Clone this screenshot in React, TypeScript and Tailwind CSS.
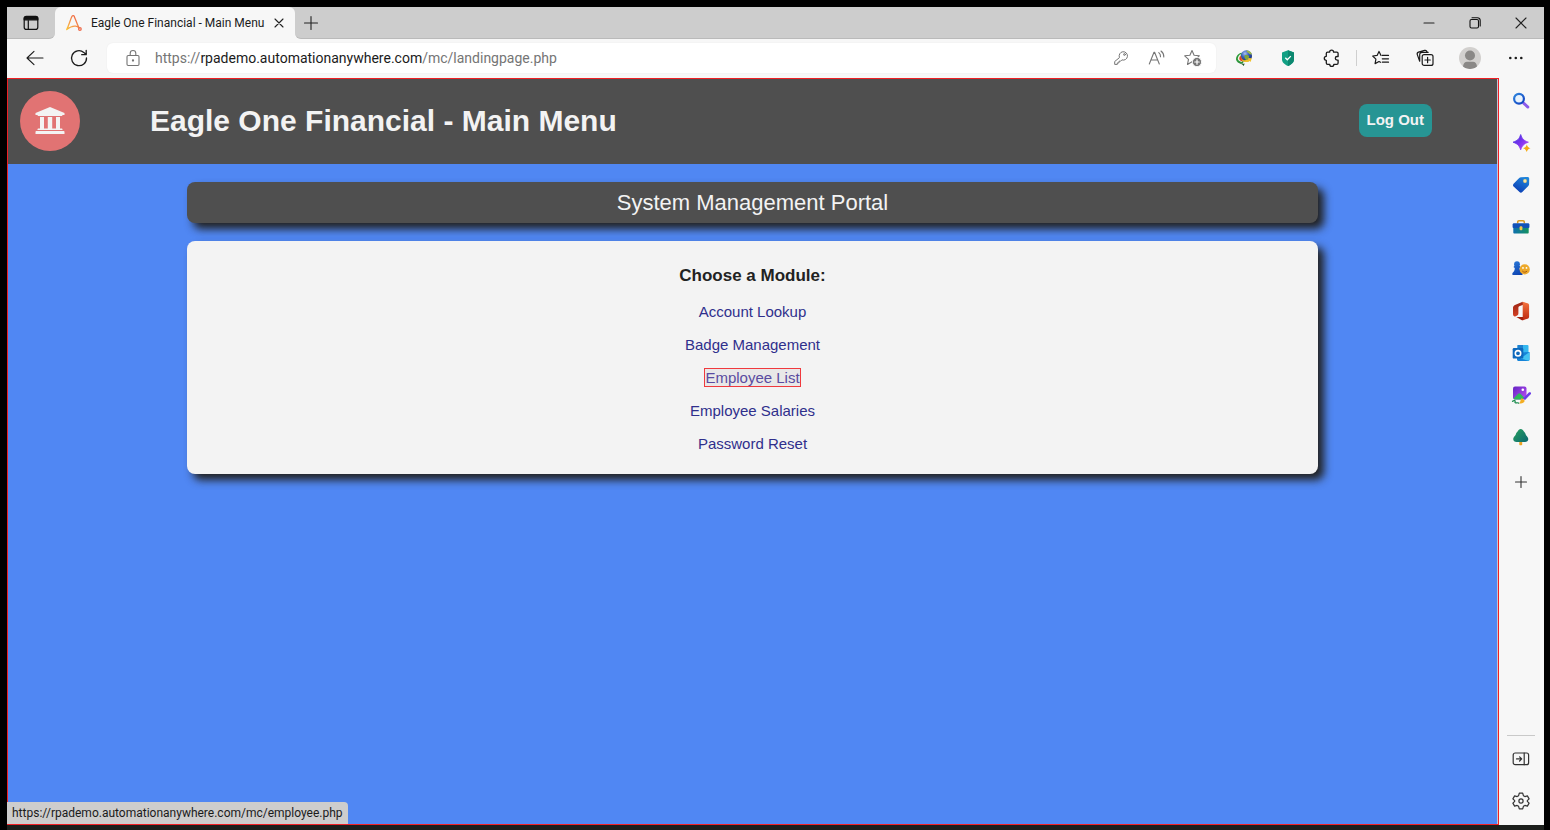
import type { ReactNode, SVGProps } from "react";

type IconProps = SVGProps<SVGSVGElement>;

function Line({ children, ...props }: IconProps) {
  return (
    <svg
      width="20"
      height="20"
      viewBox="0 0 20 20"
      fill="none"
      stroke="currentColor"
      strokeWidth="1.1"
      strokeLinecap="round"
      strokeLinejoin="round"
      aria-hidden="true"
      {...props}
    >
      {children}
    </svg>
  );
}

function Picture({ children }: { children: ReactNode }) {
  return (
    <svg width="20" height="20" viewBox="0 0 20 20" fill="none" aria-hidden="true">
      {children}
    </svg>
  );
}

const TabActionsIcon = () => (
  <Line strokeWidth="1.2">
    <rect x="3.2" y="3.6" width="13.6" height="12.8" rx="2.2" />
    <path d="M3.2 6.800V5.400a2 2 0 0 1 2-2h9.600a2 2 0 0 1 2 2V6.800Z" fill="currentColor" />
    <path d="M7.300 7.500v8.800" />
  </Line>
);

const TabLogo = () => (
  <svg className="shrink-0" width="18" height="18" viewBox="0 0 18 18" fill="none" strokeWidth="1.3" strokeLinecap="round" strokeLinejoin="round" aria-hidden="true">
    <defs>
      <linearGradient id="tab-logo" x1="1" y1="16" x2="15" y2="4" gradientUnits="userSpaceOnUse">
        <stop stopColor="#fbc531" />
        <stop offset="0.45" stopColor="#f59a4a" />
        <stop offset="1" stopColor="#ee5a45" />
      </linearGradient>
    </defs>
    <path d="M1.700 15.500C4 11.500 5 6.200 7 2.300c.5-1 1.800-1 2.200 0 1.600 4 2.800 7.700 4.700 11.300M1.700 15.500c2.800-2.300 5.800-3.800 9-3.400 1.600.2 2.600 1 3.400 2" stroke="url(#tab-logo)" />
    <circle cx="14.900" cy="15" r="1.300" stroke="#ee6a4a" />
  </svg>
);

const LockIcon = () => (
  <Line>
    <rect x="4" y="7.500" width="12" height="10" rx="1.200" />
    <path d="M7.200 7.500V5.300a2.800 2.800 0 0 1 5.600 0v2.200" />
    <circle cx="10" cy="12.500" r="0.600" fill="currentColor" />
  </Line>
);

const KeyIcon = () => (
  <Line strokeWidth="1">
    <path d="M8.300 9.300a4.200 4.200 0 1 1 2.600 2.600L9.600 13.200H8v1.700H6.300v1.500H3.700V13.900Z" />
    <circle cx="13.500" cy="6.500" r="0.900" />
  </Line>
);

const ReadAloudIcon = () => (
  <Line>
    <path d="M2.300 16 7 4.300h.6L12.300 16M4 12h6.600" />
    <path d="M11.800 4.700c1.200 1 1.800 2.500 1.700 4M14 3c1.900 1.500 2.900 3.700 2.800 6" />
  </Line>
);

const STAR = "M9 2.500l2.100 4.700 5.200.6-3.900 3.500 1 5.100L9 13.800l-4.500 2.600 1-5.100L1.700 7.800l5.200-.6Z";

const AddFavoriteIcon = () => (
  <Line>
    <path d={STAR} />
    <circle cx="14" cy="14" r="4.600" fill="#757575" stroke="#ffffff" strokeWidth="0.800" />
    <path d="M14 11.800v4.400M11.800 14h4.400" stroke="#ffffff" strokeWidth="1.200" />
  </Line>
);

const GlobeDownloadIcon = () => (
  <Picture>
    <defs>
      <radialGradient id="globe" cx="11" cy="5.500" r="8" gradientUnits="userSpaceOnUse">
        <stop stopColor="#a9c3ec" />
        <stop offset="0.450" stopColor="#3b62c4" />
        <stop offset="1" stopColor="#122a78" />
      </radialGradient>
    </defs>
    <circle cx="12.300" cy="8" r="5.700" fill="url(#globe)" />
    <path d="M12.500 2.600c2.300-.2 4.600 1.200 5.400 3.600-1.500.8-2.600-.4-3.500-1.200-.8-.6-2-1-1.900-2.400Z" fill="#9cb84a" />
    <path d="M10.500 7.500c1.700-.8 3.800-.5 4.500.8.500 1.600-1 2.600-2 4.200-1.600-.6-3-2.600-2.500-5Z" fill="#7fa53c" />
    <path d="M2 11.500C2 8 4.300 5.300 7.700 4.700 6.300 7.500 7.500 10.800 10.300 12l-1.500 3.500C5 15.800 2.300 14 2 11.500Z" fill="#2c9a3a" />
    <path d="M3.800 10.800C4 8.500 5 6.800 6.900 5.900c-.5 2.500.3 4.800 2.200 6.500l-1.300 1.500c-2.300-.3-3.700-1.400-4-3.100Z" fill="#f3f3e6" />
    <path d="M5.300 10.800c0-1.400.4-2.500 1.300-3.300.3 2.200 1.500 3.800 3.500 4.700l-1.600 1.300c-1.900-.4-3-1.300-3.200-2.700Z" fill="#df3d24" />
    <path d="M7 10.900c1.800 1.800 5 1.700 7.600.1l-.8-1 4 .2-1.200 3.800-.9-1.100c-3.200 2.200-7.300 1.200-8.700-2Z" fill="#f0c22b" />
    <path d="M4 13.500c1.800 2 4.500 2.600 6.700 2L9.700 18 8 16.300c-1.700-.3-3.200-1.300-4-2.800Z" fill="#205a2a" />
  </Picture>
);

const ShieldIcon = () => (
  <Picture>
    <path d="M10 2.200 16 4.600v6.800c0 3-2.600 5-6 6.500-3.400-1.500-6-3.500-6-6.500V4.600Z" fill="#12a084" />
    <path d="M10 2.200 16 4.600v6.800c0 3-2.600 5-6 6.500Z" fill="#0d8870" />
    <path d="m7.300 9.700 2 2 3.500-3.600" stroke="#ffffff" strokeWidth="1.300" />
  </Picture>
);

const PuzzleIcon = () => (
  <Line strokeWidth="1.300">
    <path d="M7.600 4.200a2 2 0 0 1 4 0h3.200a1.300 1.300 0 0 1 1.300 1.300v3h-1a1.800 1.800 0 0 0 0 3.600h1v3a1.300 1.300 0 0 1-1.300 1.300h-3a2 2 0 0 1-4 0H5.600a1.300 1.300 0 0 1-1.300-1.300v-2.800a2 2 0 0 1 0-4V5.500a1.300 1.300 0 0 1 1.300-1.300Z" />
  </Line>
);

const FavoritesIcon = () => (
  <Line strokeWidth="1.200">
    <path d="M10 7.400 8 3.400 6.100 7.400l-4.400.6 3.200 3.100-.8 4.500L8 13.500l1.500.8" />
    <path d="M11.300 7.400h6.200M11.300 10.800h6.200M11.300 14.200h6.200" />
  </Line>
);

const CollectionsIcon = () => (
  <Line strokeWidth="1.200">
    <rect x="7.200" y="6.600" width="10.800" height="10.800" rx="2" />
    <path d="M12.600 9.300v5.400M9.900 12h5.400" />
    <path d="M4.700 13.200 2.300 6.600a2 2 0 0 1 1.200-2.500L9.600 2.400a2 2 0 0 1 2.400 1.300v.5M4.700 13.200V6.700a2.300 2.300 0 0 1 2.300-2.400h6.200" />
  </Line>
);

const AvatarIcon = () => (
  <svg width="22" height="22" viewBox="0 0 22 22" aria-hidden="true">
    <defs>
      <clipPath id="avatar-clip">
        <circle cx="11" cy="11" r="11" />
      </clipPath>
    </defs>
    <g clipPath="url(#avatar-clip)">
      <rect width="22" height="22" fill="#d2d0ce" />
      <circle cx="11" cy="8.500" r="5" fill="#8a8886" />
      <path d="M4 20c0-3.500 2-5.300 4-5.300h6c2 0 4 1.800 4 5.300-4 2.700-10 2.700-14 0Z" fill="#8a8886" />
    </g>
  </svg>
);

const MoreIcon = () => (
  <svg width="20" height="20" viewBox="0 0 20 20" fill="currentColor" aria-hidden="true">
    <circle cx="4.300" cy="10" r="1.300" />
    <circle cx="9.800" cy="10" r="1.300" />
    <circle cx="15.300" cy="10" r="1.300" />
  </svg>
);

const SearchIcon = () => (
  <Picture>
    <defs>
      <linearGradient id="lens" x1="3" y1="3" x2="12" y2="13" gradientUnits="userSpaceOnUse">
        <stop stopColor="#2f86dd" />
        <stop offset="1" stopColor="#0f3fc0" />
      </linearGradient>
    </defs>
    <path d="m12.600 12.100 4.300 4" stroke="#8b5bea" strokeWidth="2.800" strokeLinecap="round" />
    <circle cx="8" cy="7.700" r="4.900" fill="#e9f3fc" stroke="url(#lens)" strokeWidth="2.200" />
  </Picture>
);

const SparkleIcon = () => (
  <Picture>
    <defs>
      <linearGradient id="spark" x1="2" y1="2" x2="17" y2="16" gradientUnits="userSpaceOnUse">
        <stop stopColor="#3a35d8" />
        <stop offset="0.500" stopColor="#7a33ee" />
        <stop offset="1" stopColor="#c04bf5" />
      </linearGradient>
    </defs>
    <path d="M9.700 1.500c1.500 4.500 3 6 7.700 7.700-4.700 1.700-6.200 3.200-7.700 7.700-1.500-4.500-3-6-7.700-7.700 4.700-1.700 6.200-3.200 7.700-7.700Z" fill="url(#spark)" stroke="url(#spark)" strokeWidth="0.800" strokeLinejoin="round" />
    <path d="M15.800 11.500c.8 2.300 1.500 3 3.700 3.800-2.200.8-2.900 1.500-3.700 3.800-.8-2.300-1.500-3-3.700-3.800 2.200-.8 2.900-1.500 3.700-3.800Z" fill="#f5ac13" />
  </Picture>
);

const TagIcon = () => (
  <Picture>
    <defs>
      <linearGradient id="tag" x1="15" y1="2" x2="6" y2="18" gradientUnits="userSpaceOnUse">
        <stop stopColor="#2088dc" />
        <stop offset="1" stopColor="#0b3bb3" />
      </linearGradient>
    </defs>
    <path d="M10 2.300 16.500 1.900c1 0 1.700.7 1.700 1.600l-.1 5.600c0 .7-.3 1.300-.8 1.800l-6 6.200c-.8.800-2 .8-2.800 0L2.600 11.600c-.8-.8-.8-2 0-2.800l5.600-5.700c.5-.5 1.100-.8 1.800-.8Z" fill="url(#tag)" />
    <circle cx="14" cy="6" r="1.900" fill="#f6d77a" />
    <circle cx="14" cy="6" r="0.700" fill="#ffffff" />
  </Picture>
);

const ToolboxIcon = () => (
  <Picture>
    <defs>
      <linearGradient id="toolbox" x1="2" y1="0" x2="18" y2="0" gradientUnits="userSpaceOnUse">
        <stop stopColor="#0e6fb0" />
        <stop offset="1" stopColor="#16935e" />
      </linearGradient>
    </defs>
    <path d="M6.700 6.500V5c0-.7.500-1.200 1.200-1.200h4.200c.7 0 1.200.5 1.200 1.200v1.500" stroke="#d99a20" strokeWidth="1.500" />
    <path d="M2.300 10h15.400v5.600c0 .6-.5 1-1 1H3.300c-.5 0-1-.4-1-1Z" fill="url(#toolbox)" />
    <path d="M3 6.200h14c.8 0 1.400.6 1.400 1.400v2.300c0 .7-.6 1.200-1.400 1.200H3c-.8 0-1.400-.5-1.400-1.200V7.600c0-.8.600-1.400 1.400-1.400Z" fill="#1252b8" />
    <rect x="8.600" y="9.200" width="2.800" height="4" rx="1" fill="#f3c64a" />
  </Picture>
);

const GamesIcon = () => (
  <Picture>
    <defs>
      <linearGradient id="pawn" x1="2" y1="2" x2="9" y2="17" gradientUnits="userSpaceOnUse">
        <stop stopColor="#2a7ad8" />
        <stop offset="1" stopColor="#0c3fae" />
      </linearGradient>
    </defs>
    <circle cx="6" cy="5.200" r="2.900" fill="url(#pawn)" />
    <path d="M3.500 7h5c.5 0 .9.400.9.900s-.4.900-.9.900c.1 2 .9 3.300 2 4.300.8.700 1.200 1.400 1.200 2.200 0 .5-.4.800-.9.800H2.100c-.5 0-.9-.3-.9-.8 0-.8.400-1.500 1.200-2.200 1-1 1.300-2.300 1.400-4.300-.6 0-1.100-.4-1.100-.9S3 7 3.500 7Z" fill="url(#pawn)" />
    <circle cx="13.700" cy="10.400" r="5.100" fill="#eda92b" />
    <circle cx="12" cy="8.900" r="0.900" fill="#ffffff" />
    <circle cx="15.500" cy="8.900" r="0.900" fill="#ffffff" />
    <path d="M11.300 12c1.400 1.600 3.500 1.600 4.800 0" stroke="#a85a10" strokeWidth="1" />
  </Picture>
);

const OfficeIcon = () => (
  <Picture>
    <defs>
      <linearGradient id="office-l" x1="3" y1="2" x2="6" y2="18" gradientUnits="userSpaceOnUse">
        <stop stopColor="#9c2513" />
        <stop offset="1" stopColor="#e0472a" />
      </linearGradient>
      <linearGradient id="office-r" x1="15" y1="2" x2="15" y2="18" gradientUnits="userSpaceOnUse">
        <stop stopColor="#f06f3c" />
        <stop offset="1" stopColor="#c12c10" />
      </linearGradient>
    </defs>
    <path d="M11.700.800 4 3.900C2.700 4.400 2 5.500 2 6.800v6.500c0 1.600 1.300 2.700 2.700 1.900l1.500-.8c.8-.5 1.200-1.100 1.200-2V6.500c0-.6.400-1 .9-1.200l4-1.600Z" fill="url(#office-l)" />
    <path d="M11.700.800 16.500 2.200c1 .3 1.600 1.100 1.600 2.200v11.200c0 1.100-.6 1.900-1.600 2.200l-4.800 1.400V4Z" fill="url(#office-r)" />
    <path d="M5.400 15.900h6.800v3.300c-.6.100-1.200 0-1.800-.3Z" fill="#a3210c" />
  </Picture>
);

const OutlookIcon = () => (
  <Picture>
    <rect x="6.500" y="2" width="11" height="9" rx="1" fill="#35b7ef" />
    <rect x="6.500" y="2" width="5.500" height="4.500" fill="#1d80cf" />
    <path d="M6 9.500 18.500 9v7.500c0 .8-.6 1.500-1.400 1.500H7.500c-.8 0-1.500-.7-1.500-1.500Z" fill="#1583d8" />
    <path d="m18.500 9-9 6.500 8.200 2.300c.5-.3.800-.8.800-1.300Z" fill="#42c3f2" />
    <rect x="1.700" y="5" width="10.600" height="10.600" rx="1.200" fill="#0d69bd" />
    <circle cx="7" cy="10.300" r="2.700" stroke="#ffffff" strokeWidth="1.600" />
  </Picture>
);

const ImageEditIcon = () => (
  <Picture>
    <defs>
      <linearGradient id="photo" x1="2" y1="2" x2="14" y2="14" gradientUnits="userSpaceOnUse">
        <stop stopColor="#6524c4" />
        <stop offset="1" stopColor="#b44bf0" />
      </linearGradient>
    </defs>
    <rect x="2" y="1.500" width="13.500" height="13" rx="2" fill="url(#photo)" />
    <circle cx="11.800" cy="4.800" r="1.300" fill="#ffffff" />
    <path d="m2.500 13.500 4.700-4.800c.7-.7 1.500-.7 2.200 0l4 4-2 1.800H3.800c-.7 0-1.100-.4-1.300-1Z" fill="#2fb85c" />
    <path d="m12.200 13.200 5.600-5.600c.6-.6 1.400-.6 1.900-.1s.5 1.200 0 1.800L14 15Z" fill="#6b3ce8" />
    <path d="m10.800 13 3 2.700c-.9 2.500-3.400 3.200-5.600 2.500 1.600-1 1-3.800 2.600-5.200Z" fill="#f4ae22" />
    <path d="M1.500 16.300c1.200-.8 2.500-1 2.700-.3s-.9 1.700.3 1.900c1.100.2 1.700-.6 3.200.2" stroke="#188a4b" strokeWidth="1.200" strokeLinecap="round" />
  </Picture>
);

const TreeIcon = () => (
  <Picture>
    <defs>
      <linearGradient id="tree" x1="3" y1="2" x2="16" y2="15" gradientUnits="userSpaceOnUse">
        <stop stopColor="#27a05f" />
        <stop offset="1" stopColor="#0c6a70" />
      </linearGradient>
    </defs>
    <rect x="8.300" y="13" width="2.900" height="5.300" rx="0.800" fill="#eba324" />
    <path d="M9.700 2c1.500 0 2.300 1 3.200 2.500.5.900 1.700 1.400 1.700 2.800.5 1.600 2.700 2.700 2.700 4.800 0 1.800-1.500 3-3.300 3H5.500c-1.800 0-3.300-1.200-3.300-3C2.200 10 4.300 8.900 4.900 7.300c0-1.400 1.100-1.900 1.700-2.800C7.500 3 8.200 2 9.700 2Z" fill="url(#tree)" />
  </Picture>
);

const PanelIcon = () => (
  <Line strokeWidth="1.200">
    <rect x="2.200" y="4" width="15.400" height="11.700" rx="2" />
    <path d="M13.200 4v11.700M5.500 9.900h5M8.600 7.800l2.100 2.100-2.100 2.100" />
  </Line>
);

const GearIcon = () => (
  <Line strokeWidth="1.200">
    <path d="M8.300 2.200h3.400l.7 2.500 1.500.9 2.500-.7 1.700 3-1.800 1.800v.6l1.800 1.800-1.700 3-2.500-.7-1.500.9-.7 2.500H8.300l-.7-2.500-1.500-.9-2.500.7-1.700-3 1.800-1.800v-.6L1.900 7.900l1.700-3 2.500.7 1.500-.9Z" />
    <circle cx="10" cy="10" r="2.100" />
  </Line>
);

const BankIcon = () => (
  <svg width="30" height="28" viewBox="0 0 30 28" fill="#f3f3f3" aria-hidden="true">
    <path d="M15 0 29.500 6v2h-2c0 .7-.5 1-1.100 1H3.600C3 9 2.500 8.700 2.500 8h-2V6Z" />
    <path d="M5 10h4v11.500h3.800V10h4.400v11.500H21V10h4v11.500h1.500c.6 0 1 .4 1 1V23h-25v-.500c0-.6.400-1 1-1H5Z" />
    <path d="M1.600 24h26.800c.6 0 1.100.4 1.100 1v2H.5v-2c0-.6.500-1 1.100-1Z" />
  </svg>
);

function ToolButton({ label, className, children }: { label: string; className: string; children: ReactNode }) {
  return (
    <button type="button" aria-label={label} className={`flex shrink-0 items-center justify-center ${className}`}>
      {children}
    </button>
  );
}

function TabStrip() {
  return (
    <div className="flex h-8 bg-[linear-gradient(#cdcdcd_50%,#f7f7f7_50%)]">
      <div className="flex w-12 items-center justify-center rounded-br-md border-b border-[#bababa] bg-[#cdcdcd]">
        <ToolButton label="Tab actions menu" className="size-8 text-[#111111]">
          <TabActionsIcon />
        </ToolButton>
      </div>
      <div className="flex w-60 items-center rounded-t-md bg-[#f7f7f7] pr-1 pl-2.5">
        <TabLogo />
        <span className="ml-2 flex-1 text-xs whitespace-nowrap text-[#1b1b1b]">Eagle One Financial - Main Menu</span>
        <ToolButton label="Close tab" className="size-6 text-[#222222]">
          <Line>
            <path d="m6 6 8 8M14 6l-8 8" />
          </Line>
        </ToolButton>
      </div>
      <div className="flex flex-1 items-center rounded-bl-md border-b border-[#bababa] bg-[#cdcdcd]">
        <ToolButton label="New tab" className="size-8 text-[#222222]">
          <Line>
            <path d="M10 3.500v13M3.500 10h13" />
          </Line>
        </ToolButton>
        <div className="flex-1" />
        <ToolButton label="Minimize" className="h-8 w-[46px] text-[#222222]">
          <Line>
            <path d="M5 10h10" />
          </Line>
        </ToolButton>
        <ToolButton label="Restore" className="h-8 w-[46px] text-[#111111]">
          <Line>
            <rect x="5" y="6.500" width="8.500" height="8.500" rx="1.500" />
            <path d="M7 4.700h5.500a2.700 2.700 0 0 1 2.700 2.700v5.600" />
          </Line>
        </ToolButton>
        <ToolButton label="Close window" className="h-8 w-[46px] text-[#222222]">
          <Line>
            <path d="m5 5 10 10M15 5 5 15" />
          </Line>
        </ToolButton>
      </div>
    </div>
  );
}

function Toolbar() {
  return (
    <div className="flex h-[39px] items-center bg-[#f7f7f7] pr-[5px] pb-0.5 pl-1.5 text-[#1b1b1b]">
      <ToolButton label="Back" className="h-8 w-11">
        <Line>
          <path d="M18 10H2M9 3.300 2 10l7 6.700" />
        </Line>
      </ToolButton>
      <ToolButton label="Refresh" className="h-8 w-11">
        <Line strokeWidth="1.300">
          <path d="M17.500 9.900A7.500 7.500 0 1 1 14.800 4.400L17 6.500M17.200 2.300v4.400h-4.500" />
        </Line>
      </ToolButton>
      <div className="ml-1.5 flex h-[30px] flex-1 items-center rounded-md bg-white pr-[5px] pl-4 text-[#757575] shadow-[0_0_2px_rgba(0,0,0,0.06)]">
        <LockIcon />
        <a href="#" className="ml-3 flex-1 text-sm whitespace-nowrap text-[#757575]">
          https://<span className="text-[#1b1b1b]">rpademo.automationanywhere.com</span>/mc/landingpage.php
        </a>
        <ToolButton label="Saved passwords" className="h-7 w-9">
          <KeyIcon />
        </ToolButton>
        <ToolButton label="Read aloud" className="h-7 w-9">
          <ReadAloudIcon />
        </ToolButton>
        <ToolButton label="Add to favorites" className="h-7 w-9">
          <AddFavoriteIcon />
        </ToolButton>
      </div>
      <div className="ml-1.5 flex items-center">
        <ToolButton label="Download manager" className="h-8 w-11">
          <GlobeDownloadIcon />
        </ToolButton>
        <ToolButton label="Protection" className="h-8 w-11">
          <ShieldIcon />
        </ToolButton>
        <ToolButton label="Extensions" className="h-8 w-11">
          <PuzzleIcon />
        </ToolButton>
        <div className="mx-0.5 h-4 w-px bg-[#cfcfcf]" />
        <ToolButton label="Favorites" className="h-8 w-11">
          <FavoritesIcon />
        </ToolButton>
        <ToolButton label="Collections" className="h-8 w-11">
          <CollectionsIcon />
        </ToolButton>
        <ToolButton label="Profile" className="h-8 w-[46px]">
          <AvatarIcon />
        </ToolButton>
        <ToolButton label="Settings and more" className="h-8 w-[46px]">
          <MoreIcon />
        </ToolButton>
      </div>
    </div>
  );
}

const sidebarItems = [
  { label: "Search", Icon: SearchIcon },
  { label: "Discover", Icon: SparkleIcon },
  { label: "Shopping", Icon: TagIcon },
  { label: "Tools", Icon: ToolboxIcon },
  { label: "Games", Icon: GamesIcon },
  { label: "Office", Icon: OfficeIcon },
  { label: "Outlook", Icon: OutlookIcon },
  { label: "Image Creator", Icon: ImageEditIcon },
  { label: "E-tree", Icon: TreeIcon },
];

function Sidebar() {
  return (
    <aside className="flex w-[45px] shrink-0 flex-col items-center bg-[#f7f7f7] pt-0.5 pr-0.5 pb-[3px] text-[#333333]">
      {sidebarItems.map(({ label, Icon }) => (
        <ToolButton key={label} label={label} className="h-[42px] w-full">
          <Icon />
        </ToolButton>
      ))}
      <ToolButton label="Customize sidebar" className="h-12 w-full">
        <Line>
          <path d="M10 4.500v11M4.500 10h11" />
        </Line>
      </ToolButton>
      <div className="flex-1" />
      <div className="mb-0.5 h-px w-7 bg-[#c9c9c9]" />
      <ToolButton label="Hide sidebar" className="h-[42px] w-full">
        <PanelIcon />
      </ToolButton>
      <ToolButton label="Settings" className="h-[42px] w-full">
        <GearIcon />
      </ToolButton>
    </aside>
  );
}

const modules = ["Account Lookup", "Badge Management", "Employee List", "Employee Salaries", "Password Reset"];

function Portal() {
  return (
    <div className="relative flex flex-1 border border-[#f01f24] bg-[#5087f3] font-['Liberation_Sans',Arial,sans-serif]">
      <div className="flex-1 border-r border-[#bfc6d4]">
        <header className="flex h-[85px] items-center bg-[#4f4f4f] pr-[65px] pb-0.5 pl-3">
          <div className="flex size-[60px] items-center justify-center rounded-full bg-[#e17373]">
            <BankIcon />
          </div>
          <h1 className="ml-[70px] flex-1 text-[30px] leading-9 font-bold text-[#f3f3f3]">Eagle One Financial - Main Menu</h1>
          <button type="button" className="h-[33px] rounded-lg bg-[#279594] px-2 text-[15px] font-bold text-[#f3f3f3]">
            Log Out
          </button>
        </header>
        <main className="mx-auto flex w-[76%] flex-col gap-[18px] pt-[18px] text-center">
          <h2 className="rounded-lg bg-[#4f4f4f] text-[22px] leading-[41px] text-[#f3f3f3] shadow-[6px_6px_8px_#222222]">
            System Management Portal
          </h2>
          <section className="rounded-lg bg-[#f3f3f3] pt-[23px] pb-3.5 shadow-[6px_6px_8px_#222222]">
            <h3 className="mb-[7px] text-[17px] leading-6 font-bold text-[#222222]">Choose a Module:</h3>
            <ul>
              {modules.map((name) => (
                <li key={name} className="text-[15px] leading-[33px]">
                  <a
                    href="#"
                    className={
                      name === "Employee List"
                        ? "bg-[#e8e8e8] text-[#5a4ba0] outline outline-[#f0393d]"
                        : "text-[#2f2f8c]"
                    }
                  >
                    {name}
                  </a>
                </li>
              ))}
            </ul>
          </section>
        </main>
      </div>
      <div className="absolute bottom-0 -left-px rounded-tr-sm bg-[#cdcdcd] px-[5px] font-[Roboto,sans-serif] text-xs leading-[22px] text-[#1b1b1b]">
        https://rpademo.automationanywhere.com/mc/employee.php
      </div>
    </div>
  );
}

export default function App() {
  return (
    <div className="flex min-h-screen flex-col bg-black pt-[7px] pr-1.5 pl-[7px] font-[Roboto,sans-serif]">
      <TabStrip />
      <Toolbar />
      <div className="flex flex-1">
        <Portal />
        <Sidebar />
      </div>
      <div className="h-[5px] bg-[#1c1f1c]" />
    </div>
  );
}
